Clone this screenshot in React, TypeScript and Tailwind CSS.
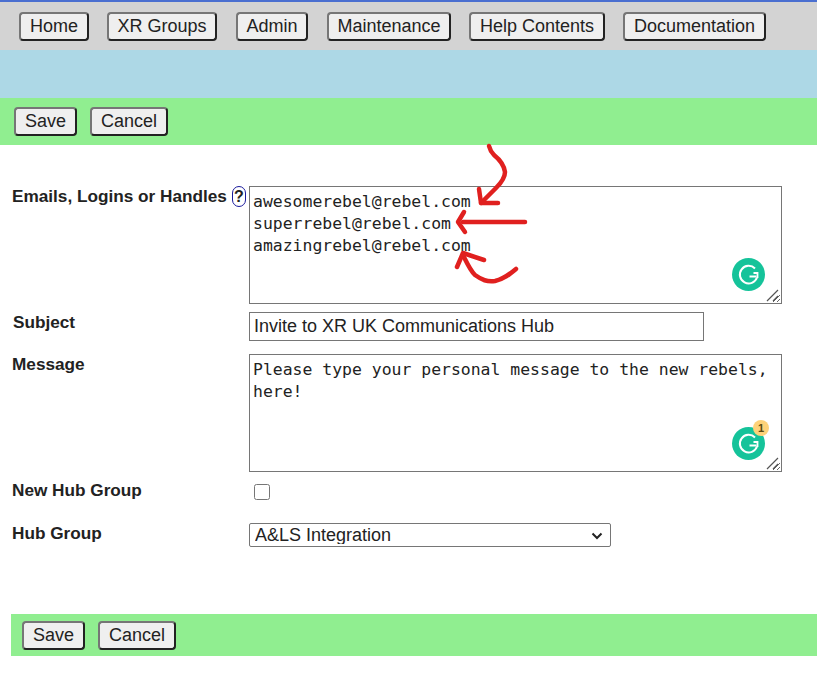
const sans = "font-['Liberation_Sans',Arial,sans-serif]"

function Btn({ label, className = '' }: { label: string; className?: string }) {
  return (
    <button
      className={`h-[29px] rounded-[4px] border-2 border-t-[#767676] border-l-[#767676] border-r-[#222] border-b-[#222] bg-[#efefef] pb-[2px] text-[18px] leading-none text-[#222] ${className}`}
    >
      {label}
    </button>
  )
}

function GrammarlyBadge({ count }: { count?: number }) {
  return (
    <div className={`absolute right-[17px] h-[33px] w-[33px] ${count ? 'bottom-[12px]' : 'bottom-[13px]'}`}>
      <svg viewBox="0 0 33 33" className="h-full w-full">
        <circle cx="16.5" cy="16.5" r="16.5" fill="#15c39a" />
        <path d="M23 10.500a8.800 8.800 0 1 0 2 9" fill="none" stroke="#fff" strokeWidth="2" />
        <path d="M17.500 18.500h7" fill="none" stroke="#fff" strokeWidth="2" />
        <path d="M21.500 15h4v5" fill="none" stroke="#fff" strokeWidth="1.800" />
      </svg>
      {count ? (
        <span className="absolute -top-[7px] -right-[4px] flex h-[16px] w-[16px] items-center justify-center rounded-full bg-[#fdd27a] text-[11px] leading-none font-bold text-[#5a4a10]">
          {count}
        </span>
      ) : null}
    </div>
  )
}

function Row({ label, className = '', children }: { label: React.ReactNode; className?: string; children: React.ReactNode }) {
  return (
    <div className={`flex ${className}`}>
      <div className="w-[249px] shrink-0 pl-3 text-[17.2px] font-bold text-[#222]">{label}</div>
      {children}
    </div>
  )
}

function NoteArea({ value, count }: { value: string; count?: number }) {
  return (
    <div className="relative h-[118px] w-[533px]">
      <textarea
        defaultValue={value}
        spellCheck={false}
        className="block h-full w-full resize border border-[#767676] bg-white px-[3px] pt-[4px] font-['DejaVu_Sans_Mono',monospace] text-[16.45px] leading-[22px] text-[#222]"
      />
      <GrammarlyBadge count={count} />
      {/* darker resize grip */}
      <svg viewBox="0 0 14 14" className="pointer-events-none absolute right-[2px] bottom-[2px] h-[14px] w-[14px]">
        <path d="M1 13L12 2M7 13l5-5" stroke="#555" strokeWidth="1.2" fill="none" />
      </svg>
    </div>
  )
}

export default function App() {
  return (
    <div className={`relative h-[676px] w-[817px] overflow-hidden bg-white ${sans}`}>
      <div className="h-[2px] bg-[#4a6fd0]" />
      <nav className="flex h-[48px] gap-[18px] bg-[#d3d3d3] pt-[10px] pl-[19px]">
        <Btn label="Home" className="w-[70px]" />
        <Btn label="XR Groups" className="w-[110px]" />
        <Btn label="Admin" className="ml-px w-[72px]" />
        <Btn label="Maintenance" className="ml-px w-[124px]" />
        <Btn label="Help Contents" className="w-[136px]" />
        <Btn label="Documentation" className="w-[143px]" />
      </nav>
      <div className="h-[48px] bg-[#add8e6]" />
      <div className="flex h-[47px] gap-[13px] bg-[#90ee90] pt-[9px] pl-[14px]">
        <Btn label="Save" className="w-[63px]" />
        <Btn label="Cancel" className="w-[78px]" />
      </div>

      <form className="pt-[41px]">
        <Row
          label={
            <span className="flex items-start gap-[5px] leading-[20px]">
              Emails, Logins or Handles
              <span className="flex h-[21px] w-[14px] items-center justify-center rounded-[7px] border border-[#1a1a9c] text-[16px]">?</span>
            </span>
          }
        >
          <NoteArea value={'awesomerebel@rebel.com\nsuperrebel@rebel.com\namazingrebel@rebel.com'} />
        </Row>
        <Row label={<span className="block pl-[1px] leading-[20px]">Subject</span>} className="mt-2">
          <input
            defaultValue="Invite to XR UK Communications Hub"
            className="h-[29px] w-[455px] border border-[#767676] px-[4px] text-[18px] text-[#222]"
          />
        </Row>
        <Row label={<span className="block leading-[20px]">Message</span>} className="mt-[13px]">
          <NoteArea value="Please type your personal message to the new rebels, here!" count={1} />
        </Row>
        <Row label={<span className="-mt-px block leading-[20px]">New Hub Group</span>} className="mt-[9px]">
          <input type="checkbox" className="mt-[3px] ml-[5px] h-[16px] w-[16px] appearance-auto" />
        </Row>
        <Row label={<span className="block leading-[20px]">Hub Group</span>} className="mt-[23px]">
          <div className="relative h-[24px] w-[362px]">
            <select className="h-full w-full appearance-none rounded-[2px] border border-[#767676] bg-white pl-[5px] text-[18px] leading-none text-[#222]">
              <option>A&amp;LS Integration</option>
            </select>
            <svg viewBox="0 0 12 8" className="pointer-events-none absolute top-[9px] right-[8px] h-[8px] w-[12px]">
              <path d="M1.500 1.500l4.500 4.500 4.500-4.500" fill="none" stroke="#222" strokeWidth="2" />
            </svg>
          </div>
        </Row>
      </form>

      <div className="mt-[67px] ml-[11px] flex h-[42px] gap-[13px] bg-[#90ee90] pt-[7px] pl-[11px]">
        <Btn label="Save" className="w-[63px]" />
        <Btn label="Cancel" className="w-[78px]" />
      </div>

      {/* hand drawn annotation arrows on top of the page */}
      <svg viewBox="0 0 817 676" className="pointer-events-none absolute inset-0 h-full w-full">
        <g fill="none" stroke="#e0201f" strokeWidth="4.500" strokeLinecap="round" strokeLinejoin="round">
          <path d="M489 146c1 4 2 6 5 9 5 4 10 10 11 17 0 6-4 11-9 16-5 5-10 10-15 15" />
          <path d="M479 189l2 14 17 0" />
          <path d="M525 222h-62" />
          <path d="M464 212l-6 10 7 10" />
          <path d="M516 269c-6 5-12 10-21 12-8 1-13-1-20-6-5-5-8-12-12-20" />
          <path d="M457 267l6-14 21 7" />
        </g>
      </svg>
    </div>
  )
}
